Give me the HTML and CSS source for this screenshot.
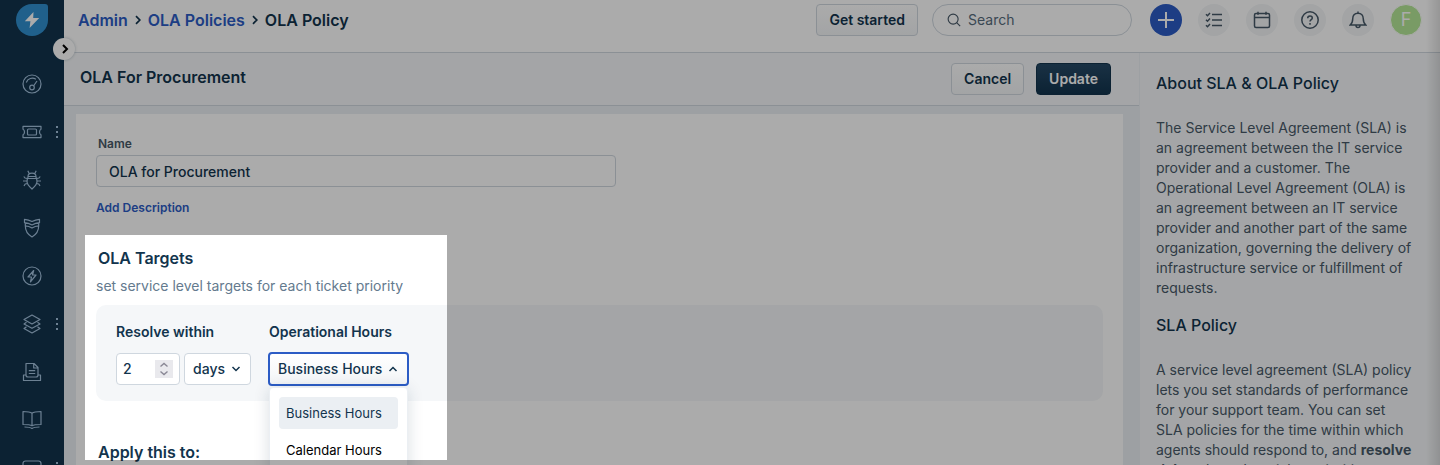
FILE: index.html
```html
<!DOCTYPE html>
<html lang="en">
<head>
<meta charset="utf-8">
<title>OLA Policy</title>
<link rel="stylesheet" href="styles.css">
</head>
<body>
<div class="app">
  <aside class="sidebar">
    <a class="logo" href="#" aria-label="Home">
      <svg width="32" height="32" viewBox="0 0 32 32"><path d="M16 0h13a3 3 0 0 1 3 3v13A16 16 0 1 1 16 0z" fill="#3090d0"/><path d="M17.500 8L8.800 17.200h5.600L13.600 24l9.600-10h-6z" fill="#fff"/></svg>
    </a>
    <button class="expand" type="button" aria-label="Expand menu"><svg width="8" height="10" viewBox="0 0 8 10"><path d="M2 1l4 4-4 4" fill="none" stroke="#000" stroke-width="2"/></svg></button>
    <nav class="nav" aria-label="Main">
      <a class="nav-item" href="#" aria-label="Dashboard"><svg class="icon" viewBox="0 0 20 20"><circle cx="10" cy="10" r="9"/><path d="M4.300 8.500a6.400 6.400 0 0 1 9.600-3.200M11.500 12L15 7"/><circle cx="10" cy="13.500" r="2.300"/></svg></a>
      <a class="nav-item" href="#" aria-label="Tickets"><svg class="icon" viewBox="0 0 20 20"><path d="M1 4.400h18v2.800c-2 .8-2 4.800 0 5.600v2.800H1v-2.800c2-.8 2-4.800 0-5.600z"/><rect x="5.500" y="7" width="9" height="6" rx="1"/></svg><span class="dots"></span></a>
      <a class="nav-item" href="#" aria-label="Problems"><svg class="icon" viewBox="0 0 20 20"><path d="M6 6.500h8v.8c.6 1.200 1 2.700 1 4.200 0 2.900-2.200 5-5 7.500-2.800-2.500-5-4.600-5-7.500 0-1.500.4-3 1-4.200zM5.500 8.500h9M6 6.500c0-2 1.600-3.300 4-3.300s4 1.300 4 3.300M7.300 3.800L5.800.8M12.700 3.800l1.500-3M5.200 8.500L3 8 1.800 6.500M5 11H1M5.400 13.500l-2.200.5L2 16M14.800 8.500L17 8l1.200-1.500M15 11h4M14.600 13.500l2.200.5L18 16"/></svg></a>
      <a class="nav-item" href="#" aria-label="Changes"><svg class="icon" viewBox="0 0 20 20"><path d="M2.500 1.300Q6.500 1.500 10 3.500 13.500 1.500 17.500 1.300v3.400Q13.500 5 10 7 6.500 5 2.500 4.700zM3.300 4.800v3Q7 8 10 10q3-2 6.700-2.200v-3M3.300 7.800c0 5.500 2.800 9 6.700 11.200 3.900-2.200 6.700-5.700 6.700-11.200"/></svg></a>
      <a class="nav-item" href="#" aria-label="Releases"><svg class="icon" viewBox="0 0 20 20"><circle cx="10" cy="10" r="9"/><path d="M11.700 4.500L6 11h3.500l-1 4.800L14 9h-3.500z"/></svg></a>
      <a class="nav-item" href="#" aria-label="Assets"><svg class="icon" viewBox="0 0 20 20"><path d="M10 1l8 4.500-8 4.500-8-4.500zM4.500 8.300L2 10l8 4.300 8-4.300-2.500-1.700M4.500 12.700L2 14.500 10 19l8-4.500-2.500-1.800"/></svg><span class="dots"></span></a>
      <a class="nav-item" href="#" aria-label="Contracts"><svg class="icon" viewBox="0 0 20 20"><path d="M4 13V1.500h8l4 4V13M11.700 1.500V6H16M6.800 8.700h6.400M6.800 11.500h6.400M4 13H1.500v5.500h17V13H16M4 13c0 1.200.7 2 2 2h8c1.300 0 2-.8 2-2"/></svg></a>
      <a class="nav-item" href="#" aria-label="Solutions"><svg class="icon" viewBox="0 0 20 20"><path d="M10 3.200C8 1.500 5 1.500 1 1.500v13c4 0 7 0 9 1.200 2-1.200 5-1.200 9-1.200v-13c-4 0-7 0-9 1.700zM10 3.200v12.500M2.500 17c3 0 5.500 0 7.500 1.500 2-1.500 4.500-1.500 7.500-1.500"/></svg></a>
      <a class="nav-item" href="#" aria-label="Reports"><svg class="icon" viewBox="0 0 20 20"><rect x="1" y="3" width="18" height="15" rx="2.500"/><path d="M5 7v7"/></svg><span class="dots"></span></a>
    </nav>
  </aside>
  <div class="main">
    <header class="topbar">
      <nav class="crumbs" aria-label="Breadcrumb">
        <a href="#">Admin</a>
        <svg width="6" height="10" viewBox="0 0 6 10"><path d="M1 1.200L4.800 5 1 8.800" fill="none" stroke="#12344d" stroke-width="1.700"/></svg>
        <a href="#">OLA Policies</a>
        <svg width="6" height="10" viewBox="0 0 6 10"><path d="M1 1.200L4.800 5 1 8.800" fill="none" stroke="#12344d" stroke-width="1.700"/></svg>
        <span>OLA Policy</span>
      </nav>
      <div class="tools">
        <button class="btn" type="button">Get started</button>
        <label class="search"><svg width="16" height="16" viewBox="0 0 16 16" fill="none" stroke="#475867" stroke-width="1.300"><circle cx="7" cy="7" r="5.700"/><path d="M11 11l4 4"/></svg><input type="search" placeholder="Search" aria-label="Search"></label>
        <button class="round primary" type="button" aria-label="New"><svg width="16" height="16" viewBox="0 0 16 16"><path d="M8 0v16M0 8h16" stroke="#fff" stroke-width="2"/></svg></button>
        <button class="round" type="button" aria-label="Tasks"><svg width="18" height="18" viewBox="0 0 18 18"><path d="M1 3.200L2.500 4.700 5 2M1 8.700l1.500 1.500L5 7.500M1 14.200l1.500 1.500L5 13M7 3.500h10M7 9h10M7 14.500h10"/></svg></button>
        <button class="round" type="button" aria-label="Calendar"><svg width="18" height="18" viewBox="0 0 18 18"><rect x="1.500" y="2.500" width="15" height="14" rx="1.500"/><path d="M1.500 6.500h15M5 .8v3M13 .8v3"/></svg></button>
        <button class="round" type="button" aria-label="Help"><svg width="18" height="18" viewBox="0 0 18 18"><circle cx="9" cy="9" r="8.200"/><path d="M6.700 7.200c0-1.500 1-2.300 2.300-2.300s2.300.8 2.300 2.100c0 1.700-2.300 1.700-2.300 3.600M9 12v1.700"/></svg></button>
        <button class="round" type="button" aria-label="Notifications"><svg width="18" height="18" viewBox="0 0 18 18"><path d="M9 .5v1.700M3.700 8c0-3.500 2-5.800 5.300-5.800s5.300 2.300 5.300 5.800c0 3 .9 4.700 2.500 6H1.200c1.600-1.300 2.500-3 2.500-6zM7 14.500a2 2 0 0 0 4 0"/></svg></button>
        <button class="avatar" type="button">F</button>
      </div>
    </header>
    <div class="body">
      <main class="content">
        <div class="titlebar">
          <h1>OLA For Procurement</h1>
          <div class="actions">
            <button class="btn" type="button">Cancel</button>
            <button class="btn dark" type="submit" form="policy">Update</button>
          </div>
        </div>
        <form class="card" id="policy">
          <label class="name-label" for="name">Name</label>
          <input class="name-input" id="name" type="text" value="OLA for Procurement">
          <a class="add" href="#">Add Description</a>
          <h2>OLA Targets</h2>
          <p class="hint">set service level targets for each ticket priority</p>
          <div class="targets">
            <div class="field">
              <label for="amount">Resolve within</label>
              <div class="row">
                <div class="number">
                  <input id="amount" type="number" value="2">
                  <span class="spin"><svg width="10" height="14" viewBox="0 0 10 14" fill="none" stroke="#8a8895" stroke-width="1.400"><path d="M1.500 4.500L5 1.500l3.500 3M1.500 9.500l3.500 3 3.500-3"/></svg></span>
                </div>
                <div class="unit">
                  <select aria-label="Unit"><option>days</option></select>
                  <svg width="10" height="6" viewBox="0 0 10 6"><path d="M1.500 1L5 4.500 8.500 1" fill="none" stroke="#12344d" stroke-width="1.500"/></svg>
                </div>
              </div>
            </div>
            <div class="field">
              <label for="hours">Operational Hours</label>
              <div class="hours-wrap">
                <button class="hours" id="hours" type="button" aria-haspopup="listbox" aria-expanded="true">Business Hours <svg width="10" height="6" viewBox="0 0 10 6"><path d="M1.500 5L5 1.500 8.500 5" fill="none" stroke="#12344d" stroke-width="1.500"/></svg></button>
                <ul class="menu" role="listbox" aria-label="Operational Hours">
                  <li class="selected" role="option" aria-selected="true">Business Hours</li>
                  <li role="option" aria-selected="false">Calendar Hours</li>
                </ul>
              </div>
            </div>
          </div>
          <h2 class="apply">Apply this to:</h2>
        </form>
      </main>
      <aside class="help">
        <h3>About SLA &amp; OLA Policy</h3>
        <p>The Service Level Agreement (SLA) is an agreement between the IT service provider and a customer. The Operational Level Agreement (OLA) is an agreement between an IT service provider and another part of the same organization, governing the delivery of infrastructure service or fulfillment of requests.</p>
        <h3>SLA Policy</h3>
        <p>A service level agreement (SLA) policy lets you set standards of performance for your support team. You can set SLA policies for the time within which agents should respond to, and <b>resolve tickets</b> based on ticket priorities.</p>
      </aside>
    </div>
  </div>
  <div class="edge"></div>
  <div class="spotlight"></div>
</div>
</body>
</html>
```
FILE: styles.css
```css
* { box-sizing: border-box; }
body {
  margin: 0;
  font: 14px/20px Inter, "Liberation Sans", sans-serif;
  color: #12344d;
  background: #fff;
}
button, input, select { font: inherit; color: inherit; margin: 0; }
a { color: #2c5cc5; text-decoration: none; }
h1, h2, h3, p, ul { margin: 0; }
h1, h2 { font-size: 16px; line-height: 20px; font-weight: 600; }

.app { position: relative; display: flex; height: 100vh; overflow: hidden; }

.sidebar { position: relative; z-index: 1; flex: none; width: 64px; padding-top: 4px; background: #12344d; }
.logo { display: block; width: 32px; height: 32px; margin: 0 auto 24px; }
.expand {
  position: absolute; top: 38px; right: -11px; width: 22px; height: 22px; padding: 0 0 0 2px;
  display: flex; align-items: center; justify-content: center;
  border: 0; border-radius: 50%; background: #fff; box-shadow: 0 0 3px rgba(18, 52, 77, .3);
}
.nav-item { position: relative; display: flex; height: 48px; align-items: center; justify-content: center; }
.icon { width: 20px; height: 20px; fill: none; stroke: #a3c0dc; stroke-width: 1.2; stroke-linejoin: round; }
.dots {
  position: absolute; right: 6px; width: 2px; height: 12px;
  background: repeating-linear-gradient(#a3c0dc 0 2px, transparent 2px 5px);
}

.main { flex: 1; min-width: 0; display: flex; flex-direction: column; }
.topbar {
  flex: none; display: flex; justify-content: space-between; align-items: center;
  padding: 4px 18px 16px 14px; border-bottom: 1px solid #cfd7df;
}
.crumbs { display: flex; align-items: center; gap: 7px; font-size: 16px; font-weight: 600; }
.tools { display: flex; align-items: center; gap: 16px; }
.btn {
  height: 32px; padding: 0 12px; border: 1px solid #cfd7df; border-radius: 4px;
  background: linear-gradient(#fff, #f3f5f7); font-weight: 600;
}
.btn.dark { border-color: #12344d; background: linear-gradient(#264966, #12344d); color: #fff; }
.search {
  display: flex; align-items: center; gap: 7px; width: 200px; height: 32px; margin: 0 2px 0 -2px; padding: 0 14px;
  border: 1px solid #cfd7df; border-radius: 16px;
}
.search input { width: 100%; min-width: 0; border: 0; padding: 0; background: none; outline: 0; }
.search input::placeholder { color: #576c7d; opacity: 1; }
.round {
  width: 32px; height: 32px; padding: 0; display: flex; align-items: center; justify-content: center;
  border: 0; border-radius: 50%; background: #f3f5f7;
}
.round svg { fill: none; stroke: #475867; stroke-width: 1.5; }
.round.primary { background: #2c5cc5; }
.avatar { width: 32px; height: 32px; padding: 0; border: 1px solid #fff; border-radius: 50%; background: #b5e897; color: #fff; font-size: 18px; }

.body { flex: 1; min-height: 0; display: flex; }
.content { flex: 1; min-width: 0; display: flex; flex-direction: column; background: #ebeff3; }
.titlebar {
  flex: none; display: flex; justify-content: space-between; align-items: flex-start;
  padding: 10px 28px 10px 16px; border-bottom: 1px solid #cfd7df; background: #f5f7f9;
}
.titlebar h1 { padding-top: 4px; }
.actions { display: flex; gap: 12px; }
.card { flex: 1; margin: 8px 16px 0 12px; padding: 20px; background: #fff; }
.name-label { display: block; margin-bottom: 1px; padding-left: 2px; font-size: 12px; font-weight: 600; color: #475867; }
.name-input {
  display: block; width: 520px; max-width: 100%; height: 32px; padding: 0 12px;
  border: 1px solid #cfd7df; border-radius: 4px; background: #fff; font-weight: 500;
}
.add { display: block; margin: 11px 0 30px; font-size: 12px; font-weight: 600; }
.card h2 { padding-left: 2px; }
.hint { margin: 8px 0 9px; color: #647a8e; }
.targets { display: flex; gap: 18px; padding: 17px 20px 16px; border-radius: 10px; background: #f5f7f9; }
.field > label { display: block; margin-bottom: 11px; font-weight: 600; }
.row { display: flex; gap: 4px; }
.number, .unit {
  display: flex; align-items: center; height: 32px; border: 1px solid #cfd7df; border-radius: 4px;
  background: #fff; font-weight: 500;
}
.number { width: 64px; padding: 0 6px; }
.number input { flex: 1; min-width: 0; padding: 0; border: 0; background: none; appearance: textfield; }
.number input::-webkit-inner-spin-button { display: none; }
.spin { flex: none; width: 18px; height: 18px; display: flex; align-items: center; justify-content: center; background: #e9e9ed; }
.unit { position: relative; width: 67px; }
.unit select { width: 100%; height: 100%; padding: 0 8px; border: 0; background: none; appearance: none; }
.unit svg { position: absolute; right: 9px; pointer-events: none; }
.hours-wrap { position: relative; }
.hours {
  display: flex; align-items: center; gap: 6px; height: 34px; margin: -1px; padding: 0 9px 0 8px;
  border: 2px solid #2c5cc5; border-radius: 4px; background: linear-gradient(#fff, #f3f5f7); font-weight: 500;
}
.menu {
  position: absolute; top: 35px; left: 0; right: 0; padding: 9px; list-style: none;
  border: 1px solid #ebeff3; border-radius: 4px; background: #fff; box-shadow: 0 2px 16px rgba(18, 52, 77, .16);
  font-size: 13px; color: #000;
}
.menu li { margin-bottom: 5px; padding: 6px 7px; border-radius: 4px; white-space: nowrap; }
.menu .selected { background: #ebeff3; color: #12344d; }
.card .apply { margin-top: 41px; }

.help { flex: none; width: 301px; padding: 20px 26px 0 16px; border-left: 1px solid #ebeff3; background: #f5f7f9; }
.help h3 { font-size: 16px; line-height: 20px; font-weight: 500; }
.help p { margin: 25px 0 17px; color: #475867; }

.edge { position: absolute; top: 0; right: 0; bottom: 0; width: 14px; background: linear-gradient(90deg, transparent, rgba(0, 0, 0, .12)); }
/* Dims everything except the highlighted region */
.spotlight { position: absolute; z-index: 2; top: 235px; left: 85px; width: 362px; height: 225px; box-shadow: 0 0 0 2000px rgba(0, 0, 0, .33); }
```
